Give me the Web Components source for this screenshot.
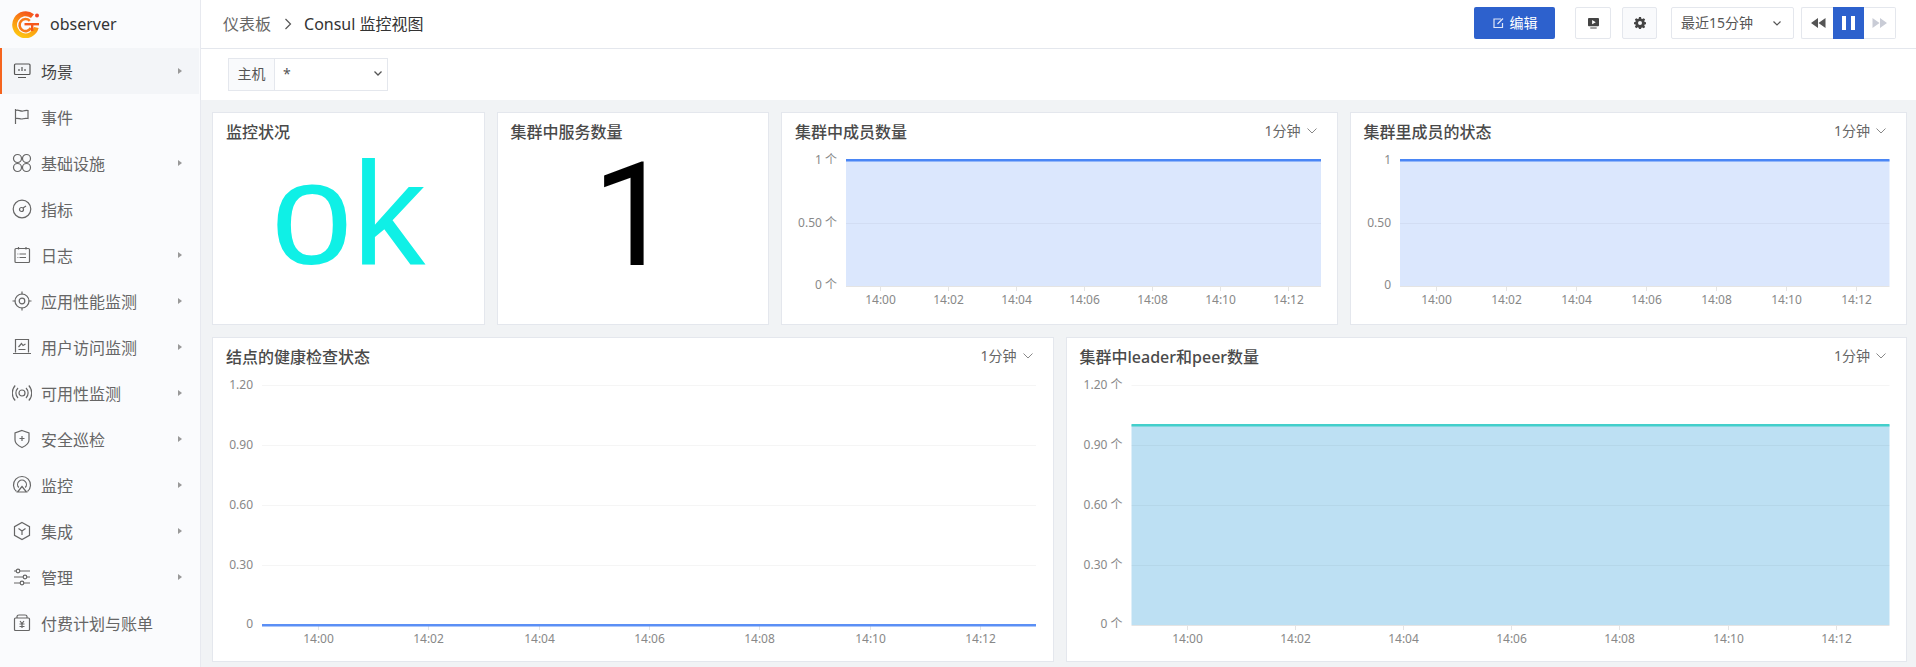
<!DOCTYPE html>
<html><head><meta charset="utf-8">
<style>
html,body{margin:0;padding:0;height:100%;overflow:hidden}
body{font-family:"Noto Sans","Noto Sans CJK SC",sans-serif;background:#fff;color:#555}
</style></head><body>
<ob-app>
<ob-sidebar slot="side">
<ob-nav label="场景" icon="scene" active arrow></ob-nav>
<ob-nav label="事件" icon="flag"></ob-nav>
<ob-nav label="基础设施" icon="infra" arrow></ob-nav>
<ob-nav label="指标" icon="metric"></ob-nav>
<ob-nav label="日志" icon="log" arrow></ob-nav>
<ob-nav label="应用性能监测" icon="apm" arrow></ob-nav>
<ob-nav label="用户访问监测" icon="rum" arrow></ob-nav>
<ob-nav label="可用性监测" icon="avail" arrow></ob-nav>
<ob-nav label="安全巡检" icon="shield" arrow></ob-nav>
<ob-nav label="监控" icon="monitor" arrow></ob-nav>
<ob-nav label="集成" icon="hex" arrow></ob-nav>
<ob-nav label="管理" icon="sliders" arrow></ob-nav>
<ob-nav label="付费计划与账单" icon="bill"></ob-nav>
</ob-sidebar>
<ob-topbar slot="top"></ob-topbar>
<ob-filter slot="top"></ob-filter>
<ob-row cols="272.5fr 272.5fr 556.5fr 557.5fr" h="213">
<ob-stat title="监控状况" value="ok" color="#0ff0e6" font="Liberation Sans" size="146" shift="-1"></ob-stat>
<ob-stat title="集群中服务数量" value="1" color="#000" font="Roboto" size="145" shift="1"></ob-stat>
<ob-chart title="集群中成员数量" unit=" 个" ticks="1,0.50,0" plot="64,47,475,173" first="98" step="68" mode="fill" color="#4a86f5" fill="#dbe7fd" value="1"></ob-chart>
<ob-chart title="集群里成员的状态" ticks="1,0.50,0" plot="49,47,489.500,173" first="84.500" step="70" mode="fill" color="#4a86f5" fill="#dbe7fd" value="1"></ob-chart>
</ob-row>
<ob-row cols="1fr 1fr" h="325" style="margin-top:12px">
<ob-chart title="结点的健康检查状态" ticks="1.20,0.90,0.60,0.30,0" plot="49,47,774,287" first="105" step="110.300" mode="zero" color="#5b8ff5" value="0"></ob-chart>
<ob-chart title="集群中leader和peer数量" unit=" 个" ticks="1.20,0.90,0.60,0.30,0" plot="64.500,47,758,287" first="119.500" step="108.200" mode="fill" color="#43cfcb" fill="#bde0f3" value="1"></ob-chart>
</ob-row>
</ob-app>
<script>
const ICONS={
scene:'<rect x="2.500" y="3" width="15.500" height="10.500" rx="1"/><path d="M7 10V8M10 10V6M13 10V8M6 16.500h8"/>',
flag:'<path d="M3.500 2v15"/><path d="M3.500 3.500c3-1.500 5 1.500 7.500.5 2-.6 3.500-.6 5-.5v8c-2-.3-3.500-.2-5 .3-2.500.8-4.500-1-7.500-.3"/>',
infra:'<circle cx="5.500" cy="5.500" r="4"/><circle cx="14.500" cy="5.500" r="4"/><circle cx="5.500" cy="14.500" r="4"/><circle cx="14.500" cy="14.500" r="4"/>',
metric:'<circle cx="10" cy="10" r="8.800"/><circle cx="9.500" cy="10.500" r="2"/><path d="M11 9l3-2"/>',
log:'<rect x="3" y="3.500" width="14.500" height="14" rx="1"/><path d="M6.500 2v2.500M14 2v2.500M7.500 9H14M7.500 12.500H14M5.500 9h.8M5.500 12.500h.8"/>',
apm:'<circle cx="10" cy="10" r="7"/><circle cx="10" cy="10" r="2.800"/><path d="M10 .5v3M10 16.500v3M.5 10h3M16.500 10h3"/>',
rum:'<path d="M3.500 15.500V2.500h13v13M1 16.500h18"/><path d="M6.500 10l3-3.500 1.500 2 2.500-1.500M6.500 12.500h7"/>',
avail:'<circle cx="10" cy="10" r="3"/><path d="M6 5a7 7 0 0 0 0 10M14 5a7 7 0 0 1 0 10M3.200 2.500a11 11 0 0 0 0 15M16.800 2.500a11 11 0 0 1 0 15"/>',
shield:'<path d="M10 1.500l7 2.500v7c0 4-3.500 6-7 7.500-3.500-1.500-7-3.500-7-7.500V4z"/><path d="M7.500 9.500h5M10 7v5"/>',
monitor:'<path d="M4.500 16.500a8.500 8.500 0 1 1 11 0"/><path d="M6.800 12.500a4.400 4.400 0 1 1 6.400 0"/><path d="M10 11.500l4.500 5.500h-9z"/>',
hex:'<path d="M10 1.500l7.500 4.200v8.600L10 18.500l-7.500-4.200V5.700z"/><path d="M6.500 7.500L10 10l3.500-2.500M10 10v4"/>',
sliders:'<path d="M2 4h2.500M8 4h10M2 10h9M14.500 10H18M2 16h6M11.500 16H18"/><circle cx="6" cy="4" r="1.800"/><circle cx="13" cy="10" r="1.800"/><circle cx="10" cy="16" r="1.800"/>',
bill:'<path d="M5 5V3.500C5 2.500 6 2 7 2h6c1 0 2 .5 2 1.500V5"/><path d="M2.500 6c0-.6.500-1 1-1h13c.6 0 1 .4 1 1v10.500c0 .6-.4 1-1 1h-13c-.5 0-1-.4-1-1z"/><path d="M8 8l2 2.500L12 8M7.500 11h5M7.500 13.500h5M10 10.500v4.500"/>'
};
function def(name,html,init){customElements.define(name,class extends HTMLElement{
  constructor(){super();this.attachShadow({mode:'open'});}
  connectedCallback(){this.shadowRoot.innerHTML=typeof html==='function'?html(this):html;if(init)init(this);}
});}

def('ob-app',`<style>
:host{display:grid;grid-template-columns:201px 1fr;width:1916px;height:667px;overflow:hidden}
.side{border-right:1px solid #e7e9ef;background:#fafbfd}
.main{display:flex;flex-direction:column;min-width:0;background:#f1f3f5}
.top{display:block;background:#fff}
.body{display:block;padding:12px 9px 0 11px}
</style>
<div class="side"><slot name="side"></slot></div>
<div class="main"><div class="top"><slot name="top"></slot></div><div class="body"><slot></slot></div></div>`);

def('ob-sidebar',`<style>
:host{display:block;height:667px}
.brand{height:48px;display:flex;align-items:center;gap:11px;padding-left:12px;font-size:16px;color:#333;line-height:22px}
svg{width:27px;height:27px;display:block}
nav{display:block}
</style>
<div class="brand"><svg viewBox="0 0 27 27"><defs><linearGradient id="g" x1=".7" y1="0" x2=".3" y2="1"><stop offset="0" stop-color="#f5581c"/><stop offset=".45" stop-color="#fa9012"/><stop offset="1" stop-color="#fdc211"/></linearGradient></defs>
<path d="M20.500 5.200A11 11 0 1 0 24.300 16.500" fill="none" stroke="url(#g)" stroke-width="4.800"/>
<path d="M17.800 9.800A6 6 0 1 0 18.800 17" fill="none" stroke="#f87a18" stroke-width="2.600"/>
<path d="M12.500 13.200H27" stroke="#f5581c" stroke-width="2.400"/><path d="M20.200 13v7" stroke="#f5581c" stroke-width="2.400"/>
<circle cx="25" cy="4.500" r="2" fill="#f2452a"/></svg><span>observer</span></div>
<nav><slot></slot></nav>`);

def('ob-nav',e=>`<style>
:host{display:flex;align-items:center;height:46px;box-sizing:border-box;font-size:16px;line-height:22px;color:#666}
:host([active]){background:#f3f5f8;color:#444;border-left:2px solid #f5641e;margin-right:1px}
.ic{width:20px;height:20px;margin-left:12px;flex:none;fill:none;stroke:#666;stroke-width:1.200}
:host([active]) .ic{margin-left:10px;stroke:#555}
.t{margin:2px 0 0 9px;flex:1;white-space:nowrap}
.ar{width:0;height:0;border-left:4px solid #999;border-top:3.500px solid transparent;border-bottom:3.500px solid transparent;margin-right:18px}
:host([active]) .ar{margin-right:17px}
</style><svg class="ic" viewBox="0 0 20 20">${ICONS[e.getAttribute('icon')]}</svg><span class="t">${e.getAttribute('label')}</span>${e.hasAttribute('arrow')?'<i class="ar"></i>':''}`);

def('ob-topbar',`<style>
:host{display:flex;align-items:center;height:41px;padding:7px 20px 0 22px;border-bottom:1px solid #e4e7ed;font-size:16px;line-height:22px;box-sizing:content-box}
.crumb{color:#666;margin-top:-7px}
.sep{margin:-7px 10px 0 11px;width:12px;height:12px;fill:none;stroke:#555;stroke-width:1.200}
.cur{color:#333;margin-top:-7px}
.sp{flex:1}
.ctl{display:flex;align-items:center;align-self:flex-start}
.btn{height:32px;box-sizing:border-box;display:flex;align-items:center;justify-content:center;border:1px solid #e4e7ed;background:#fff;border-radius:2px}
.edit{width:81px;background:#2d61cd;border:0;color:#fff;font-size:14px;line-height:20px;gap:6px;margin-right:20px}
.edit svg{width:12px;height:12px;fill:none;stroke:#dfe6f8;stroke-width:1.200}
.b1{width:36px;margin-right:11px}.b2{width:35px;background:#f9fafc;margin-right:14px}
.sel{width:123px;justify-content:space-between;padding:0 11px 0 9px;font-size:14px;line-height:20px;color:#555;margin-right:7px}
.sel svg{width:10px;height:10px;fill:none;stroke:#555;stroke-width:1.200}
.grp{display:flex;height:32px}
.grp>div{height:32px;box-sizing:border-box;display:flex;align-items:center;justify-content:center}
.g1{width:32px;border:1px solid #e4e7ed;border-right:0;border-radius:2px 0 0 2px}
.g2{width:31px;background:#2d61cd}
.g3{width:32px;border:1px solid #e4e7ed;border-left:0;border-radius:0 2px 2px 0}
</style>
<span class="crumb">仪表板</span><svg class="sep" viewBox="0 0 12 12"><path d="M3.500 1l5 5-5 5"/></svg><span class="cur">Consul 监控视图</span><span class="sp"></span>
<div class="ctl">
<div class="btn edit"><svg viewBox="0 0 12 12"><path d="M9 2H2v8.500h8.500V6"/><path d="M5.500 7l5.500-5.500"/></svg><span>编辑</span></div>
<div class="btn b1"><svg width="11" height="11" viewBox="0 0 12 12"><path fill="#444" d="M1 0h10a1 1 0 0 1 1 1v7a1 1 0 0 1-1 1H1a1 1 0 0 1-1-1V1a1 1 0 0 1 1-1zM4.500 2.200v4.600L8.500 4.500zM2.500 10.300h7v1.200h-7z" fill-rule="evenodd"/></svg></div>
<div class="btn b2"><svg width="12" height="12" viewBox="0 0 24 24"><path fill="#444" fill-rule="evenodd" d="M10 0h4l.7 3.300 2 .8L19.500 2.300l2.800 2.800-1.800 2.800.8 2L24 10.600v3.800l-2.700.7-.8 2 1.800 2.800-2.800 2.800-2.800-1.800-2 .8L14 24h-4l-.7-2.700-2-.8-2.800 1.800-2.800-2.800 1.800-2.800-.8-2L0 14.400v-3.800l2.700-.7.8-2L1.700 5.100l2.800-2.800 2.800 1.800 2-.8zM12 8a4 4 0 1 0 0 8 4 4 0 0 0 0-8z"/></svg></div>
<div class="btn sel"><span>最近15分钟</span><svg viewBox="0 0 10 10"><path d="M1.500 3.500L5 7l3.500-3.500"/></svg></div>
<div class="grp"><div class="g1"><svg width="16" height="10" viewBox="0 0 16 10"><path fill="#555" d="M8 0v10L1 5zM15.500 0v10L8.500 5z"/></svg></div>
<div class="g2"><svg width="13" height="14" viewBox="0 0 13 14"><path fill="#fff" d="M0 0h4v14H0zM9 0h4v14H9z"/></svg></div>
<div class="g3"><svg width="16" height="10" viewBox="0 0 16 10"><path fill="#c9ccd6" d="M.5 0v10L7.500 5zM8 0v10l7-5z"/></svg></div></div>
</div>`);

def('ob-filter',`<style>
:host{display:flex;align-items:flex-start;height:51px;box-sizing:border-box;padding:9px 0 0 27px;background:#fff}
.box{display:flex;height:33px;box-sizing:border-box;border:1px solid #e4e7ed;font-size:14px;line-height:29px;color:#555}
.l{width:46px;box-sizing:border-box;text-align:center;background:#f9fafc;border-right:1px solid #e4e7ed}
.v{width:112px;box-sizing:border-box;padding-left:8px;display:flex;justify-content:space-between;align-items:flex-start}
svg{width:10px;height:10px;margin:9px 4px 0 0;fill:none;stroke:#555;stroke-width:1.300}
</style><div class="box"><div class="l">主机</div><div class="v"><span>*</span><svg viewBox="0 0 10 10"><path d="M1.500 3.500L5 7l3.500-3.500"/></svg></div></div>`);

def('ob-row',e=>`<style>
:host{display:grid;grid-template-columns:${e.getAttribute('cols')};column-gap:12px;height:${e.getAttribute('h')}px}
</style><slot></slot>`);

const cardCss=`:host{display:block;background:#fff;border:1px solid #e4e7ed;box-sizing:border-box;overflow:hidden;min-width:0;position:relative}
.title{font-size:16px;font-weight:500;line-height:20px;color:#4a4a4a;padding:9px 13px 0;white-space:nowrap}`;

def('ob-stat',e=>`<style>${cardCss}
:host{display:flex;flex-direction:column}
.v{display:flex;justify-content:center;margin-top:${e.getAttribute('shift')}px;font-family:"${e.getAttribute('font')}",sans-serif;line-height:${e.getAttribute('size')}px;font-size:${e.getAttribute('size')}px;color:${e.getAttribute('color')}}
</style><div class="title">${e.getAttribute('title')}</div><div class="v">${e.getAttribute('value')}</div>`);

def('ob-chart',e=>{
 const g=n=>e.getAttribute(n);
 const [x,top,w,base]=g('plot').split(',').map(Number);
 const ticks=g('ticks').split(','),unit=g('unit')||'';
 const n=ticks.length-1,first=+g('first'),step=+g('step');
 let s='';
 const mode=g('mode'),color=g('color'),fill=g('fill');
 const H=base-top, maxv=parseFloat(ticks[0]);
 const ly=base-H*(+g('value'))/maxv;
 if(mode==='fill') s+=`<rect x="${x}" y="${ly}" width="${w}" height="${base-ly}" fill="${fill}"/>`;
 ticks.forEach((t,i)=>{
   const yy=Math.round(top+H*i/n)+.5;
   if(i<n)s+=`<line x1="${x}" x2="${x+w}" y1="${yy}" y2="${yy}" stroke="#000" stroke-opacity=".04"/>`;
   s+=`<text x="${x-9}" y="${yy+(i<n?3:2)}" text-anchor="end">${t}${unit}</text>`;
 });
 s+=`<line x1="${x}" x2="${x+w}" y1="${base+.5}" y2="${base+.5}" stroke="#e4e4e4"/>`;
 for(let i=0;i<7;i++){const tx=Math.round(first+step*i)+.5;
   s+=`<line x1="${tx}" x2="${tx}" y1="${base}" y2="${base+5}" stroke="#e4e4e4"/>`;
   s+=`<text x="${tx}" y="${base+18}" text-anchor="middle">14:${String(i*2).padStart(2,'0')}</text>`;}
 s+=`<rect x="${x}" y="${Math.round(ly)-1}" width="${w}" height="2.500" fill="${color}"/>`;
 return `<style>${cardCss}
 svg.plot{position:absolute;left:0;top:0;width:100%;height:100%;font-size:12px;font-family:"Noto Sans","Noto Sans CJK SC",sans-serif;fill:#888}
 .hd{display:flex;justify-content:space-between;position:relative}
 .iv{display:flex;align-items:center;gap:6px;font-size:14px;line-height:20px;color:#666;padding:7px 20px 0 0}
 .iv svg{width:10px;height:10px;fill:none;stroke:#888;stroke-width:1}
 </style><svg class="plot">${s}</svg><div class="hd"><div class="title">${g('title')}</div><div class="iv"><span>1分钟</span><svg viewBox="0 0 10 10"><path d="M.5 2.500L5 7l4.500-4.500"/></svg></div></div>`;
});
</script>
</body></html>
